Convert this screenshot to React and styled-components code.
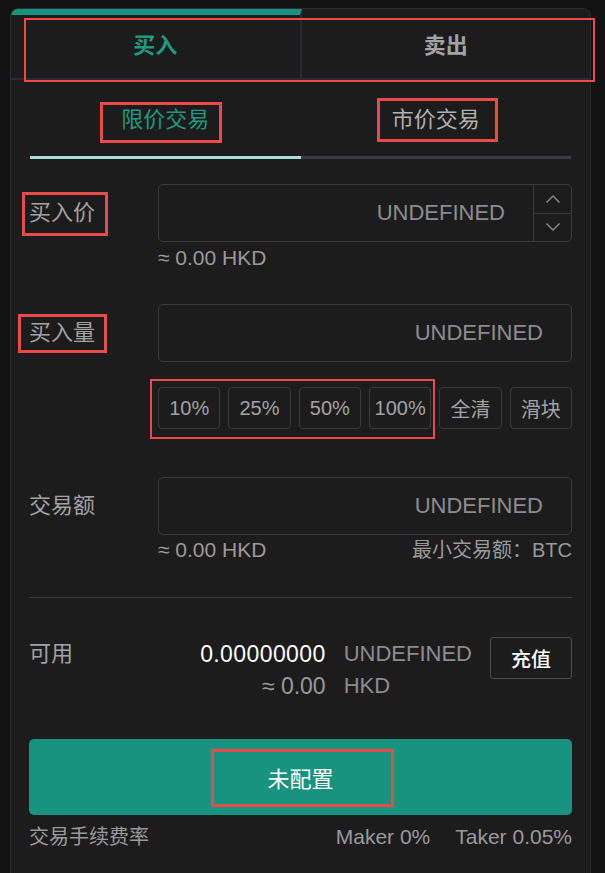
import React from "react";
import styled, { createGlobalStyle } from "styled-components";

const GlobalStyle = createGlobalStyle`
  html, body {
    margin: 0;
    padding: 0;
    background: #121212;
    overflow: hidden;
  }
  body {
    font-family: "Liberation Sans", "Noto Sans CJK SC", sans-serif;
    color: #a0a0a0;
  }
  * { box-sizing: border-box; }
`;

const GREEN = "#18937f";
const BORDER = "#3a3a3f";

const Page = styled.div`
  position: relative;
  width: 605px;
  height: 873px;
  padding: 8px 14px 0 10px;
`;

const Panel = styled.div`
  width: 581px;
  min-height: 900px;
  background: #1c1c1c;
  border: 1px solid #2c2c30;
  border-radius: 8px 8px 0 0;
  overflow: hidden;
`;

const TabBar = styled.div`
  display: flex;
  height: 71px;
  border-bottom: 2px solid #2a2a2e;
`;

const SideTab = styled.div`
  flex: 1;
  display: flex;
  align-items: center;
  justify-content: center;
  font-size: 22px;
  font-weight: 700;
  color: ${(p) => (p.$active ? "#1f9a80" : "#a3a3a3")};
  border-top: 6px solid ${(p) => (p.$active ? GREEN : "transparent")};
  border-right: ${(p) => (p.$divider ? "2px solid #2a2a2e" : "none")};
  padding-bottom: 7px;
`;

const Body = styled.div`
  padding: 0 18px;
`;

const SubTabs = styled.div`
  display: flex;
  margin: 0 1px;
`;

const SubTab = styled.div`
  flex: 1;
  text-align: center;
  padding: 25px 0 21px;
  line-height: 30px;
  font-size: 22px;
  color: ${(p) => (p.$active ? "#1e9a82" : "#b0b0b0")};
  border-bottom: 3px solid ${(p) => (p.$active ? "#a9ddd0" : "#3a3a40")};
`;

const Row = styled.div`
  display: grid;
  grid-template-columns: 129px 1fr;
  align-items: center;
  margin-top: ${(p) => p.$mt}px;
`;

const Label = styled.div`
  font-size: 22px;
  color: #a3a3a3;
  line-height: 30px;
`;

const InputBox = styled.div`
  display: flex;
  height: 58px;
  border: 1px solid ${BORDER};
  border-radius: 5px;
  overflow: hidden;
`;

const Value = styled.div`
  flex: 1;
  display: flex;
  align-items: center;
  justify-content: flex-end;
  padding-right: 28px;
  font-size: 22px;
  color: #8c8c90;
`;

const Stepper = styled.div`
  width: 38px;
  display: flex;
  flex-direction: column;
  border-left: 1px solid ${BORDER};
`;

const StepBtn = styled.div`
  flex: 1;
  display: flex;
  align-items: center;
  justify-content: center;
  color: #8c8c90;
  border-top: ${(p) => (p.$split ? `1px solid ${BORDER}` : "none")};
`;

const Hint = styled.div`
  display: flex;
  justify-content: space-between;
  margin-top: ${(p) => p.$mt}px;
  margin-left: 129px;
  font-size: 20px;
  line-height: 24px;
  color: #9a9a9a;
`;

const Latin = styled.span`
  font-size: 21px;
`;

const QuickRow = styled.div`
  display: flex;
  gap: 8px;
  margin-top: 25px;
  margin-left: 129px;
`;

const QuickBtn = styled.div`
  flex: 1;
  height: 42px;
  display: flex;
  align-items: center;
  justify-content: center;
  border: 1px solid ${BORDER};
  border-radius: 4px;
  font-size: 20px;
  color: #a3a3a3;
`;

const Divider = styled.div`
  height: 1px;
  background: #3c3c40;
  margin-top: 35px;
`;

const AvailRow = styled.div`
  display: flex;
  align-items: flex-start;
  margin-top: 39px;
`;

const AvailLabel = styled(Label)`
  width: 129px;
  padding-top: 2px;
`;

const Values = styled.div`
  flex: 1;
  display: grid;
  grid-template-columns: 1fr auto;
  column-gap: 18px;
  padding-top: 1px;
  font-size: 23px;
  line-height: 32px;
`;

const Num = styled.div`
  text-align: right;
  color: ${(p) => (p.$bright ? "#ffffff" : "#9a9a9a")};
  letter-spacing: ${(p) => (p.$bright ? "0.4px" : "0")};
`;

const Unit = styled.div`
  font-size: 22px;
  color: #8c8c90;
`;

const DepositBtn = styled.div`
  width: 82px;
  height: 42px;
  margin-left: 18px;
  display: flex;
  align-items: center;
  justify-content: center;
  border: 1px solid #4c4c52;
  border-radius: 3px;
  font-size: 20px;
  font-weight: 500;
  color: #ffffff;
`;

const SubmitBtn = styled.div`
  height: 76px;
  margin-top: 37px;
  display: flex;
  align-items: center;
  justify-content: center;
  background: ${GREEN};
  border-radius: 5px;
  font-size: 22px;
  color: #ffffff;
`;

const Footer = styled.div`
  display: flex;
  justify-content: space-between;
  margin-top: 10px;
  font-size: 20px;
  line-height: 24px;
  color: #9a9a9a;
`;

const Fees = styled.div`
  display: flex;
  gap: 25px;
  font-size: 21px;
`;

const Annot = styled.div`
  position: absolute;
  left: ${(p) => p.$x}px;
  top: ${(p) => p.$y}px;
  width: ${(p) => p.$w}px;
  height: ${(p) => p.$h}px;
  border: ${(p) => p.$b}px solid #ea4a4a;
  pointer-events: none;
`;

const Chevron = ({ up }) => (
  <svg width="16" height="10" viewBox="0 0 16 10" fill="none">
    <path
      d={up ? "M1.5 8.5 L8 2 L14.5 8.5" : "M1.5 1.5 L8 8 L14.5 1.5"}
      stroke="#8c8c90"
      strokeWidth="1.4"
    />
  </svg>
);

const annotations = [
  { x: 24, y: 18, w: 571, h: 64, b: 2 },
  { x: 100, y: 102, w: 122, h: 41, b: 3 },
  { x: 377, y: 98, w: 121, h: 44, b: 3 },
  { x: 22, y: 192, w: 86, h: 44, b: 3 },
  { x: 18, y: 314, w: 89, h: 39, b: 3 },
  { x: 150, y: 379, w: 285, h: 60, b: 2 },
  { x: 211, y: 749, w: 183, h: 58, b: 3 },
];

export default function App() {
  return (
    <>
      <GlobalStyle />
      <Page>
        <Panel>
          <TabBar>
            <SideTab $active $divider>买入</SideTab>
            <SideTab>卖出</SideTab>
          </TabBar>
          <Body>
            <SubTabs>
              <SubTab $active>限价交易</SubTab>
              <SubTab>市价交易</SubTab>
            </SubTabs>

            <Row $mt={25}>
              <Label>买入价</Label>
              <InputBox>
                <Value>UNDEFINED</Value>
                <Stepper>
                  <StepBtn><Chevron up /></StepBtn>
                  <StepBtn $split><Chevron /></StepBtn>
                </Stepper>
              </InputBox>
            </Row>
            <Hint $mt={4}>
              <Latin>≈ 0.00 HKD</Latin>
            </Hint>

            <Row $mt={34}>
              <Label>买入量</Label>
              <InputBox>
                <Value>UNDEFINED</Value>
              </InputBox>
            </Row>
            <QuickRow>
              {["10%", "25%", "50%", "100%", "全清", "滑块"].map((t) => (
                <QuickBtn key={t}>{t}</QuickBtn>
              ))}
            </QuickRow>

            <Row $mt={48}>
              <Label>交易额</Label>
              <InputBox>
                <Value>UNDEFINED</Value>
              </InputBox>
            </Row>
            <Hint $mt={3}>
              <Latin>≈ 0.00 HKD</Latin>
              <span>最小交易额：BTC</span>
            </Hint>

            <Divider />

            <AvailRow>
              <AvailLabel>可用</AvailLabel>
              <Values>
                <Num $bright>0.00000000</Num>
                <Unit>UNDEFINED</Unit>
                <Num>≈ 0.00</Num>
                <Unit>HKD</Unit>
              </Values>
              <DepositBtn>充值</DepositBtn>
            </AvailRow>

            <SubmitBtn>未配置</SubmitBtn>
            <Footer>
              <span>交易手续费率</span>
              <Fees>
                <span>Maker 0%</span>
                <span>Taker 0.05%</span>
              </Fees>
            </Footer>
          </Body>
        </Panel>
        {annotations.map((a, i) => (
          <Annot key={i} $x={a.x} $y={a.y} $w={a.w} $h={a.h} $b={a.b} />
        ))}
      </Page>
    </>
  );
}
